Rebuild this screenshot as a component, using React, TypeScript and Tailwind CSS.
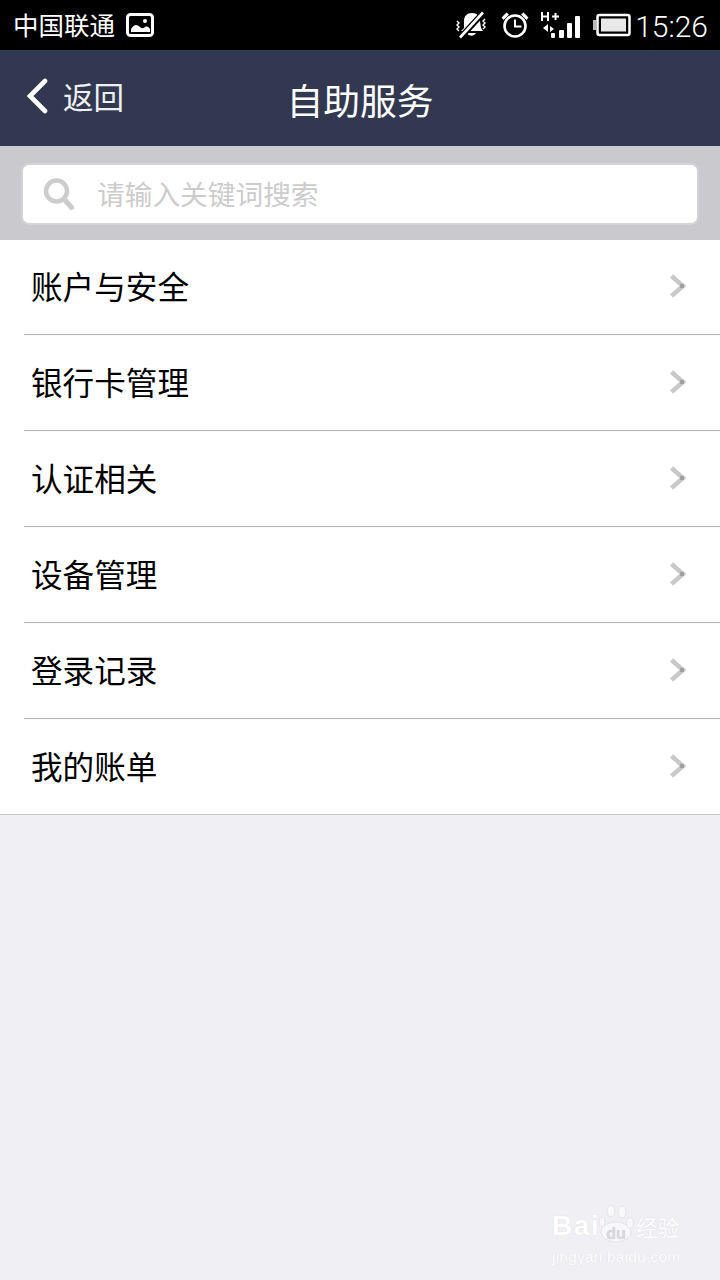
const cjk = "font-['Noto_Sans_CJK_SC','Noto_Sans_CJK_JP',sans-serif]";

const items = ["账户与安全", "银行卡管理", "认证相关", "设备管理", "登录记录", "我的账单"];

function Chevron() {
  return (
    <svg width="18" height="24" viewBox="0 0 18 24" className="shrink-0">
      <path d="M2.500 2 L14 12 L2.500 22" fill="none" stroke="#c8c8c8" strokeWidth="4.500" strokeLinejoin="miter" />
      <path d="M11 12 L15 12" stroke="#a0a0a0" strokeWidth="4" />
    </svg>
  );
}

function StatusIcons() {
  return (
    <div className="flex items-center">
      {/* muted vibrate bell */}
      <svg width="32" height="28" viewBox="0 0 32 28" className="mr-[13px]">
        <path d="M17 2c5 0 8 3 8 8l1 7 2 3H6l3-3 0-7c0-5 3-8 8-8z" fill="#fff" />
        <path d="M12 22c1 3 7 4 9 0z" fill="#fff" />
        <path d="M5 27 L29 1" stroke="#000" strokeWidth="6" />
        <path d="M5 26.500 L28 1.500" stroke="#fff" strokeWidth="2.600" />
        <path d="M2 10l2 2-2 2 2 2-2 2 2 2M30 8l-2 2 2 2-2 2 2 2-2 2" stroke="#fff" strokeWidth="1.400" fill="none" />
      </svg>
      {/* alarm */}
      <svg width="30" height="28" viewBox="0 0 30 28" className="mr-[10px]">
        <circle cx="15" cy="15" r="10.500" fill="none" stroke="#fff" strokeWidth="2.600" />
        <path d="M15 8.500V15.500H21.500" fill="none" stroke="#fff" strokeWidth="2" />
        <path d="M1.500 6.500L6.500 1.500l2.500 2L3.500 9zM28.500 6.500L23.500 1.500l-2.500 2L26.500 9z" fill="#fff" />
      </svg>
      {/* signal */}
      <svg width="40" height="28" viewBox="0 0 40 28" className="mr-[13px]">
        <path d="M2 1V10M8 1V10M2 5.500H8M12 5.500H19M15.500 2V9" stroke="#fff" strokeWidth="2" fill="none" />
        <path d="M8 13l-5 4 5 4zM10 15l4 3-4 3z" fill="#fff" />
        <rect x="11" y="22" width="4" height="5" rx="1" fill="#fff" />
        <rect x="19" y="19" width="5" height="8" rx="1" fill="#fff" />
        <rect x="27" y="12" width="5" height="15" rx="1" fill="#fff" />
        <rect x="35" y="5" width="5" height="22" rx="1" fill="#fff" />
      </svg>
      {/* battery */}
      <svg width="38" height="24" viewBox="0 0 38 24" className="mr-[4px]">
        <rect x="0" y="7" width="3" height="10" fill="#bbb" />
        <rect x="4.500" y="2" width="32" height="20" rx="2" fill="none" stroke="#fff" strokeWidth="2.500" />
        <rect x="8" y="5.500" width="25" height="13" fill="#e8e8e8" />
      </svg>
      <span className="mt-[3px] font-['Roboto',sans-serif] text-[30px] font-light leading-none text-white">15:26</span>
    </div>
  );
}

export default function App() {
  return (
    <div className={`relative flex h-[1280px] w-[720px] flex-col overflow-hidden bg-[#efeff4] ${cjk}`}>
      <div className="flex h-[50px] items-center justify-between bg-black pl-[13px] pr-[12px]">
        <div className="flex items-center">
          <span className="-mt-[2px] text-[25.500px] leading-none text-white">中国联通</span>
          <svg width="28" height="24" viewBox="0 0 28 24" className="ml-[11px] -mt-[1px]">
            <rect x="1.500" y="1.500" width="25" height="21" rx="3" fill="none" stroke="#fff" strokeWidth="3" />
            <circle cx="19" cy="8" r="2" fill="#fff" />
            <path d="M5 19v-3c3-5 6-5 9-2 2 2 4 1 5 0 2-1 4 0 5 2v3z" fill="#fff" />
          </svg>
        </div>
        <StatusIcons />
      </div>

      <div className="relative flex h-[96px] items-center justify-center bg-[#323850]">
        <div className="absolute left-[25px] top-0 flex h-full items-center">
          <svg width="24" height="36" viewBox="0 0 24 36" className="-mt-[4px]">
            <path d="M20 3 L5 18 L20 33" fill="none" stroke="#fff" strokeWidth="4.600" strokeLinecap="round" strokeLinejoin="miter" />
          </svg>
          <span className="ml-[14px] -mt-[4px] text-[30.500px] leading-none text-[#eef0f4]">返回</span>
        </div>
        <span className="mt-[2px] text-[36.800px] leading-none text-white">自助服务</span>
      </div>

      <div className="flex h-[94px] items-center bg-[#c9c9ce] px-[21px] pt-[2px]">
        <div className="flex h-[62px] w-full items-center rounded-[8px] border-2 border-[#d4d4d6] bg-white pl-[20px]">
          <svg width="32" height="34" viewBox="0 0 32 34">
            <circle cx="13.500" cy="14" r="10.500" fill="none" stroke="#cccccc" strokeWidth="4.500" />
            <path d="M21 22 L28.500 30.500" stroke="#cccccc" strokeWidth="5" strokeLinecap="round" />
          </svg>
          <span className="ml-[22px] text-[27.700px] leading-none text-[#cccccc]">请输入关键词搜索</span>
        </div>
      </div>

      <div className="bg-white">
        {items.map((t, i) => (
          <div key={t} className={i === 0 ? "h-[95px]" : i === items.length - 1 ? "h-[96px] border-b border-[#c8c8c8]" : "h-[96px]"}>
            <div className={`ml-[24px] flex h-full items-center justify-between pl-[7px] pr-[33px] ${i === 0 ? "pb-[2px]" : "pb-[2px]"} ${i < items.length - 1 ? "border-b border-[#b4b4b4]" : ""}`}>
              <span className="text-[31.600px] leading-none text-black">{t}</span>
              <Chevron />
            </div>
          </div>
        ))}
      </div>

      <div className="absolute left-[552px] top-[1202px] flex w-[132px] flex-col whitespace-nowrap text-white [text-shadow:0_0_1px_#d0d0d6]">
        <div className="flex h-[42px] items-end">
          <span className="font-['Liberation_Sans',sans-serif] text-[28px] font-bold leading-[36px] tracking-[1.500px]">Bai</span>
          <svg width="37" height="40" viewBox="0 0 37 40" className="-ml-[3px] shrink-0">
            <g fill="#f8f8fa" stroke="#dedee4" strokeWidth="0.800">
              <ellipse cx="19" cy="28" rx="15" ry="10" />
              <ellipse cx="5" cy="18" rx="3" ry="5" />
              <ellipse cx="14" cy="7" rx="4" ry="6" />
              <ellipse cx="25" cy="8" rx="4" ry="6" />
              <ellipse cx="33" cy="19" rx="3.500" ry="5.500" />
            </g>
            <text x="19" y="35" textAnchor="middle" fontSize="16" fontWeight="700" fontFamily="Liberation Sans" fill="#d8d8de">du</text>
          </svg>
          <span className="ml-[2px] text-[21.500px] leading-[34px]">经验</span>
        </div>
        <span className="mt-[4px] font-['Liberation_Sans',sans-serif] text-[15.500px] leading-[18px] tracking-[0.2px]">jingyan.baidu.com</span>
      </div>
    </div>
  );
}
